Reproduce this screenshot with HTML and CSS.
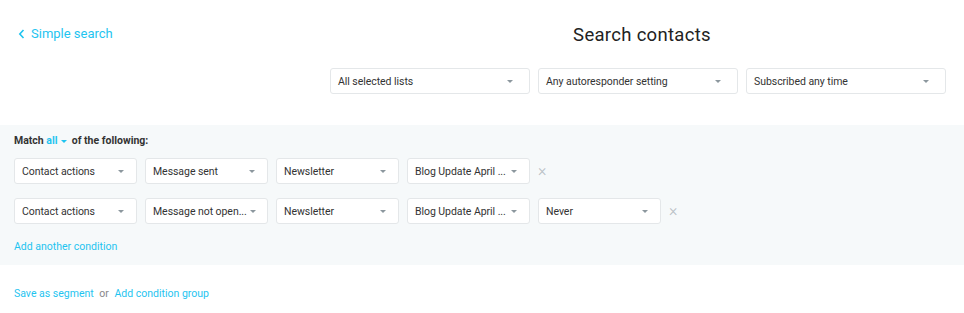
FILE: index.html
```html
<!DOCTYPE html>
<html lang="en">
<head>
    <meta charset="UTF-8">
    <meta name="viewport" content="width=device-width, initial-scale=1.0">
    <title>Search contacts</title>
    <link rel="stylesheet" href="styles.css">
</head>
<body>

    <div class="top">
        <div class="back-col">
            <a class="back-link" href="#">
                <svg width="7" height="10" viewBox="0 0 7 10"><path d="M5.5 1 L1.8 5 L5.5 9" fill="none" stroke="currentColor" stroke-width="1.6"/></svg>
                Simple search
            </a>
        </div>
        <div class="head-col">
            <h1>Search contacts</h1>
            <div class="filters">
                <div class="select big"><span class="label">All selected lists</span><span class="caret"></span></div>
                <div class="select big"><span class="label">Any autoresponder setting</span><span class="caret"></span></div>
                <div class="select big"><span class="label">Subscribed any time</span><span class="caret"></span></div>
            </div>
        </div>
    </div>

    <!-- conditions -->
    <div class="conditions">
        <div class="match">Match <span class="accent">all</span> <span class="caret accent-caret"></span> of the following:</div>

        <div class="cond-row">
            <div class="select"><span class="label">Contact actions</span><span class="caret"></span></div>
            <div class="select"><span class="label">Message sent</span><span class="caret"></span></div>
            <div class="select"><span class="label">Newsletter</span><span class="caret"></span></div>
            <div class="select"><span class="label">Blog Update April ...</span><span class="caret"></span></div>
            <span class="remove">&times;</span>
        </div>

        <div class="cond-row">
            <div class="select"><span class="label">Contact actions</span><span class="caret"></span></div>
            <div class="select"><span class="label">Message not open...</span><span class="caret"></span></div>
            <div class="select"><span class="label">Newsletter</span><span class="caret"></span></div>
            <div class="select"><span class="label">Blog Update April ...</span><span class="caret"></span></div>
            <div class="select"><span class="label">Never</span><span class="caret"></span></div>
            <span class="remove">&times;</span>
        </div>

        <a class="link add-cond" href="#">Add another condition</a>
    </div>

    <div class="footer">
        <a class="link" href="#">Save as segment</a>
        <span class="or">or</span>
        <a class="link" href="#">Add condition group</a>
    </div>

</body>
</html>
```

FILE: styles.css
```css
body {
    margin: 0;
    font-family: Roboto, 'Liberation Sans', sans-serif;
    background-color: #fff;
    color: #333;
}

a {
    text-decoration: none;
}

.top {
    display: flex;
    padding: 22px 18px 0 18px;
    height: 103px;
    box-sizing: border-box;
}

.back-col {
    flex: 1;
}

.back-link {
    display: inline-flex;
    align-items: center;
    gap: 6px;
    color: #1fc4f0;
    font-size: 13px;
    line-height: 24px;
}

.head-col {
    width: 616px;
}

.head-col h1 {
    margin: 0;
    padding: 1px 0 0 8px;
    font-size: 18.5px;
    font-weight: 400;
    color: #222;
    text-align: center;
    line-height: 24px;
    height: 45px;
    letter-spacing: 0.3px;
}

.filters {
    display: flex;
    gap: 8px;
}

.select {
    display: flex;
    align-items: center;
    gap: 3px;
    box-sizing: border-box;
    width: 123px;
    height: 26px;
    padding: 0 12px 0 7px;
    background-color: #fff;
    border: 1px solid #e4e7e9;
    border-radius: 3px;
    font-size: 10.5px;
    color: #333;
    white-space: nowrap;
}

.select.big {
    width: 200px;
    padding: 0 16px 0 7px;
}

.label {
    flex: 1;
    letter-spacing: -0.05px;
}

.caret {
    display: inline-block;
    flex: none;
    width: 0;
    height: 0;
    border-left: 3px solid transparent;
    border-right: 3px solid transparent;
    border-top: 3px solid #8c979e;
}

.conditions {
    background-color: #f6f9fa;
    padding: 8px 14px 0 14px;
    height: 140px;
    box-sizing: border-box;
    margin-top: 22px;
}

.match {
    font-size: 10.5px;
    font-weight: 700;
    color: #333;
    line-height: 15px;
    margin-bottom: 10px;
}

.accent {
    color: #1fc4f0;
}

.accent-caret {
    border-top-color: #1fc4f0;
    vertical-align: middle;
    margin: 0 2px 0 1px;
}

.cond-row {
    display: flex;
    align-items: center;
    gap: 8px;
    margin-bottom: 14px;
}

.remove {
    color: #b8c0c5;
    font-size: 16px;
    margin-left: 0;
    line-height: 1;
    font-weight: 300;
}

.link {
    color: #1fc4f0;
    font-size: 10.5px;
}

.add-cond {
    display: block;
    line-height: 14px;
    margin-top: 16px;
}

.footer {
    padding: 22px 14px 0 14px;
    font-size: 10.5px;
    line-height: 14px;
}

.or {
    color: #888;
    margin: 0 3px;
}
```
